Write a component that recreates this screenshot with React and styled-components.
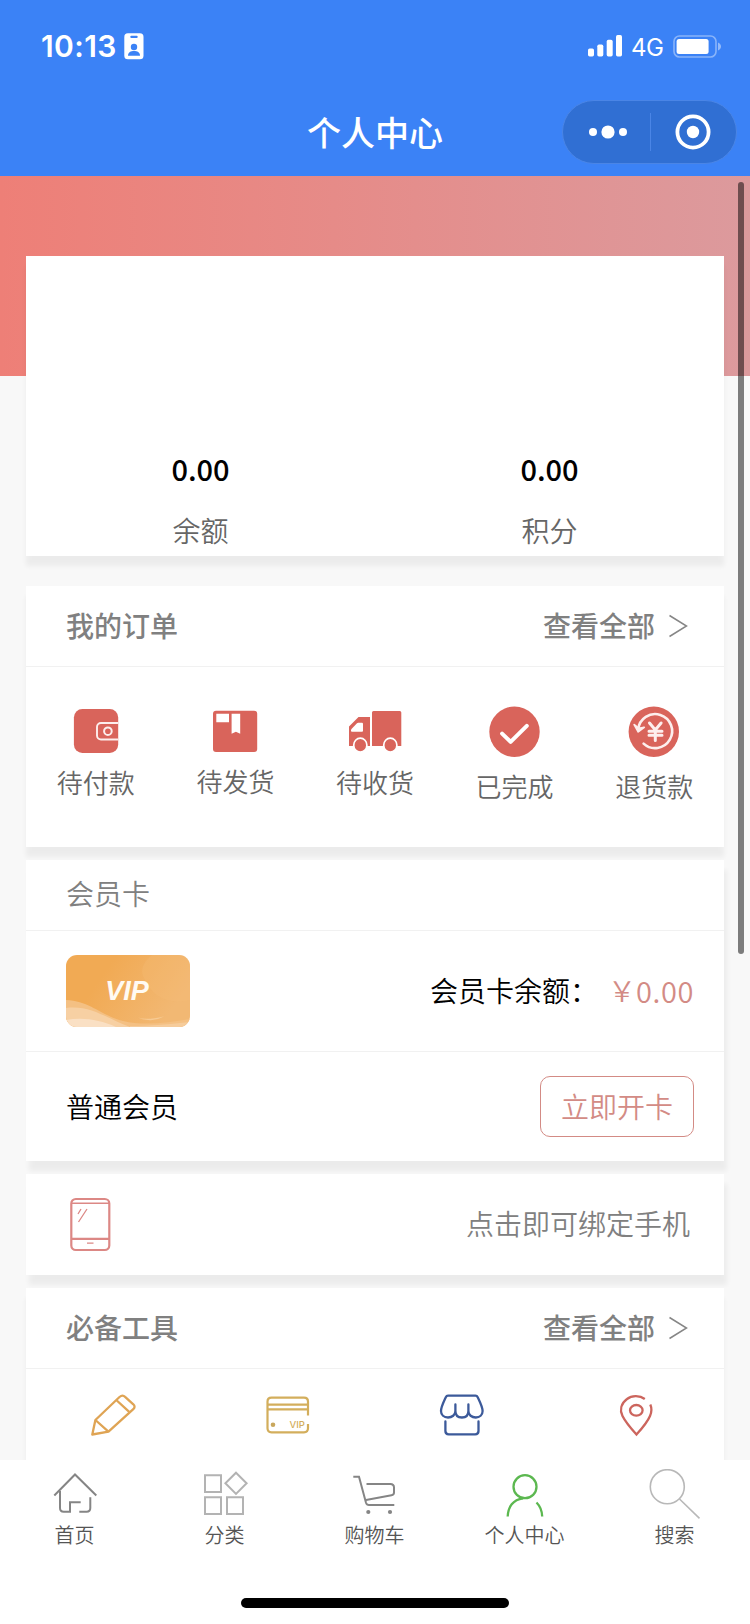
import styled, { createGlobalStyle } from 'styled-components';

const orders = [
  { name: '待付款', icon: WalletIcon },
  { name: '待发货', icon: BoxIcon },
  { name: '待收货', icon: TruckIcon },
  { name: '已完成', icon: DoneIcon },
  { name: '退货款', icon: RefundIcon },
];

const tools = [PencilIcon, VipCardIcon, ShopIcon, PinIcon];

const tabs = [
  { name: '首页', icon: HomeIcon },
  { name: '分类', icon: CategoryIcon },
  { name: '购物车', icon: CartIcon },
  { name: '个人中心', icon: UserIcon },
  { name: '搜索', icon: SearchIcon },
];

const App = () => {
  return (
    <Page>
      <GlobalStyle />
      <Header>
        <StatusBar>
          <Clock>
            10:13
            <BadgeIcon />
          </Clock>
          <Signals>
            <SignalIcon />
            <Network>4G</Network>
            <BatteryIcon />
          </Signals>
        </StatusBar>
        <NavBar>
          <h1>个人中心</h1>
          <Capsule>
            <CapsuleButton aria-label='更多' $width={87}>
              <MoreIcon />
            </CapsuleButton>
            <CapsuleButton aria-label='关闭' $width={87} $divided>
              <CloseIcon />
            </CapsuleButton>
          </Capsule>
        </NavBar>
      </Header>

      <Content>
        <Banner />
        <AccountCard>
          <Stat>
            <strong>0.00</strong>
            <span>余额</span>
          </Stat>
          <Stat>
            <strong>0.00</strong>
            <span>积分</span>
          </Stat>
        </AccountCard>

        <Card $top={30} $height={261}>
          <SectionHead title='我的订单' />
          <OrderList>
            {orders.map(({ name, icon: Icon }) => (
              <li key={name}>
                <Icon />
                <span>{name}</span>
              </li>
            ))}
          </OrderList>
        </Card>

        <Card $top={13} $height={301} $shadowX={3}>
          <Row $height={71} $line>
            <Muted>会员卡</Muted>
          </Row>
          <Row $height={121} $line>
            <MemberCard />
            <Balance>
              会员卡余额：<em>￥</em>
              <b>0.00</b>
            </Balance>
          </Row>
          <Row $height={109}>
            <Level>普通会员</Level>
            <OpenButton>立即开卡</OpenButton>
          </Row>
        </Card>

        <Card $top={13} $height={101} $shadowX={3}>
          <Row $height={101} $right={34}>
            <PhoneIcon />
            <Muted>点击即可绑定手机</Muted>
          </Row>
        </Card>

        <Card $top={13} $height={260}>
          <SectionHead title='必备工具' />
          <ToolList>
            {tools.map((Icon, i) => (
              <li key={i}>
                <Icon />
              </li>
            ))}
          </ToolList>
        </Card>
        <ScrollBar />
      </Content>

      <TabBar>
        <TabList>
          {tabs.map(({ name, icon: Icon }) => (
            <li key={name}>
              <Icon />
              <span>{name}</span>
            </li>
          ))}
        </TabList>
        <HomeIndicator />
      </TabBar>
    </Page>
  );
};

const SectionHead = ({ title }) => (
  <Row $height={81} $right={36} $line>
    <h2>{title}</h2>
    <More>
      <span>查看全部</span>
      <svg width='20' height='24' fill='none' stroke='#868686' strokeWidth='1.5'>
        <path d='M1.5 1.5 18.5 12 1.5 22.5' />
      </svg>
    </More>
  </Row>
);

/* 상태바, 네비게이션 아이콘 */
function BadgeIcon() {
  return (
    <svg width='20' height='27' viewBox='0 0 20 27'>
      <rect x='.3' y='.3' width='19.2' height='26' rx='3.6' fill='#fff' />
      <rect x='6.3' y='2.8' width='7.4' height='2.2' rx='1' fill='#3b82f6' />
      <circle cx='10' cy='14' r='3.2' fill='#3b82f6' />
      <path d='M4 22.8c0-3.6 2.8-4.8 6-4.8s6 1.2 6 4.8z' fill='#3b82f6' />
    </svg>
  );
}

function SignalIcon() {
  return (
    <svg width='35' height='22' fill='#fff'>
      <rect x='0' y='13.5' width='6' height='8' rx='1.7' />
      <rect x='9.3' y='9.5' width='6' height='12' rx='1.7' />
      <rect x='18.7' y='4.7' width='6' height='16.8' rx='1.7' />
      <rect x='28' y='0' width='6' height='21.5' rx='1.7' />
    </svg>
  );
}

function BatteryIcon() {
  return (
    <svg width='49' height='23' viewBox='0 0 49 23'>
      <rect x='1' y='1' width='42' height='21' rx='5.5' fill='none' stroke='#fff' strokeOpacity='.4' strokeWidth='1.6' />
      <rect x='3.6' y='4' width='32' height='15' rx='2.5' fill='#fff' />
      <path d='M45 7.5c4 1.5 4 6.5 0 8z' fill='#fff' fillOpacity='.45' />
    </svg>
  );
}

function MoreIcon() {
  return (
    <svg width='38' height='14' fill='#fff'>
      <circle cx='4' cy='7' r='4' />
      <circle cx='19' cy='7' r='6.6' />
      <circle cx='34' cy='7' r='4' />
    </svg>
  );
}

function CloseIcon() {
  return (
    <svg width='36' height='36'>
      <circle cx='18' cy='18' r='15.6' fill='none' stroke='#fff' strokeWidth='3.8' />
      <circle cx='18' cy='18' r='6.2' fill='#fff' />
    </svg>
  );
}

/* 주문 아이콘 */
function WalletIcon() {
  return (
    <svg width='56' height='47' fill='#d9645b'>
      <rect x='5.9' y='3' width='44.3' height='44' rx='8.5' />
      <path d='M50.2 17H33a4 4 0 0 0-4 4v8.5a4 4 0 0 0 4 4h17.2' fill='none' stroke='#fdeeed' strokeWidth='1.9' />
      <circle cx='39.9' cy='25.2' r='3.8' fill='none' stroke='#fdeeed' strokeWidth='2' />
    </svg>
  );
}

function BoxIcon() {
  return (
    <svg width='56' height='46' fill='#d9645b'>
      <rect x='6' y='4.8' width='44.2' height='41.2' rx='3' />
      <path d='M9.3 7.8H22v8.5H9.3zM24.6 7.8h8.6v20l-4.3-2-4.3 2z' fill='#fff' />
    </svg>
  );
}

function TruckIcon() {
  return (
    <svg width='56' height='46.5' fill='#d9645b'>
      <path d='M2 40V20.5L11.5 11H23v29zM25 6.5q0-1.5 1.5-1.5h26.3q1.5 0 1.5 1.5V40H25z' />
      <path d='M4 25v-1.5l6-6.2q.5-.5 1.2-.5H15q1 0 1 1v7q0 1-1 1H5q-1 0-1-.8z' fill='#fff' />
      <ellipse cx='13.3' cy='39.2' rx='6.6' ry='7' stroke='#fff' strokeWidth='1.7' />
      <ellipse cx='43.3' cy='39.2' rx='6.6' ry='7' stroke='#fff' strokeWidth='1.7' />
    </svg>
  );
}

function DoneIcon() {
  return (
    <svg width='56' height='51' fill='none'>
      <circle cx='27.5' cy='25.7' r='25.2' fill='#d9645b' />
      <path d='m15.1 27.6 8.5 8.2 16.2-16' stroke='#fff' strokeWidth='4' strokeLinecap='round' strokeLinejoin='round' />
    </svg>
  );
}

function RefundIcon() {
  return (
    <svg width='56' height='51' fill='none' stroke='#fdeeed' strokeWidth='2.6' strokeLinecap='round'>
      <circle cx='27.8' cy='25.7' r='25.2' fill='#d9645b' stroke='none' />
      <path d='M12.2 23.5A17 17 0 1 1 17.6 37.6' />
      <path d='m8.2 18.6 4 7.2 6-4.5-5.5 1z' fill='#fdeeed' strokeWidth='1.8' strokeLinejoin='round' />
      <path d='m23.5 17 5.8 7 5.8-7M29.3 24v10.500M23 25.3h13M23 29.3h13' strokeWidth='3' />
    </svg>
  );
}

/* 멤버십 */
function MemberCard() {
  return (
    <svg width='124' height='72' viewBox='0 0 124 72'>
      <defs>
        <linearGradient id='vip' x1='0' y1='0' x2='1' y2='.4'>
          <stop offset='.35' stopColor='#f1aa54' />
          <stop offset='1' stopColor='#f2b873' />
        </linearGradient>
        <clipPath id='vip-clip'>
          <rect width='124' height='72' rx='11' />
        </clipPath>
      </defs>
      <g clipPath='url(#vip-clip)'>
        <rect width='124' height='72' fill='url(#vip)' />
        <path d='M86 0c-11 9-12 17-7 25 6 12 18 26 45 20V0z' fill='#f4bd77' fillOpacity='.3' />
        <path d='M0 45c24 1 34 15 57 21 20 5 44 2 67-2v8H0z' fill='#f4c083' />
        <path d='M0 53c24-3 38 9 64 19H0z' fill='#f7d0a3' />
        <path d='M0 65c18-3 34 0 50 7H0z' fill='#fae0c4' />
        <path d='M64 71c22 0 40-2 60-4v5H64z' fill='#f6cc9b' />
        <path d='M72 62.5q8 3 26-1-8 4.5-16 3.500-6-.5-10-2.500z' fill='#f7ca92' />
      </g>
      <VipText x='61' y='44.5' textAnchor='middle'>
        VIP
      </VipText>
    </svg>
  );
}

function PhoneIcon() {
  return (
    <svg width='48' height='56' fill='none' stroke='#dc8885' strokeWidth='2.2'>
      <rect x='5.3' y='2' width='38' height='51' rx='4.5' />
      <path d='M6 6.3h37' strokeWidth='1.4' />
      <path d='M6 41.8h37' />
      <path d='m15 12-3 5M21 12l-8.5 13M21 46.1h6.5' strokeWidth='1.3' />
    </svg>
  );
}

/* 도구 아이콘 */
function PencilIcon() {
  return (
    <svg width='48' height='48' fill='none' stroke='#dfa454' strokeWidth='2.3' strokeLinejoin='round'>
      <path d='M3.3 43.5 6.4 29 30.5 6q3-2.7 5.6-.2l8.2 7.5q2.5 2.5 0 4.8L19.5 40.7z' />
      <path d='m6.4 29 13 11.7M27.8 9.5l12.4 11.4' />
    </svg>
  );
}

function VipCardIcon() {
  return (
    <svg width='48' height='48' fill='none' stroke='#d3ae5c' strokeWidth='2.2'>
      <path d='M44 24.5V10.7q0-4-4-4H7.5q-4 0-4 4v26.600q0 4 4 4H40q4 0 4-4V33M3.5 13.7H44M3.5 18.3H44' />
      <circle cx='9' cy='33.7' r='2.3' fill='#c9a75c' stroke='none' />
      <CardText x='25.5' y='37.3'>
        VIP
      </CardText>
    </svg>
  );
}

function ShopIcon() {
  return (
    <svg width='48' height='48' fill='none' stroke='#3c5a9a' strokeWidth='2.3' strokeLinecap='round'>
      <path d='M10 4.7h27.5q1.5 0 2.2 1.5C42 11 44.6 16 44.6 20c0 4-3 6.5-6.8 6.5-4 0-7.4-2.5-7.4-6.5 0 4-2.5 6.5-6.5 6.5S17.4 24 17.4 20c0 4-3.4 6.5-7.4 6.5-4 0-7-2.5-7-6.5 0-4 2.6-9 4.8-13.8q.7-1.5 2.2-1.5zM17.4 20v-6.5M30.4 20v-6.5' />
      <path d='M7.4 30.5V40q0 3.3 3.3 3.3h26.5q3.3 0 3.3-3.3v-9.5' />
    </svg>
  );
}

function PinIcon() {
  return (
    <svg width='48' height='48' fill='none' stroke='#cc655d' strokeWidth='2.3'>
      <path d='M31.8 8C27 4.5 19 4 14 8c-6 4.5-7.5 11-4.5 17C13 32 18.5 38 23.5 43.5 28.5 38 34 32 37 25c1.8-4 2-7.5.3-11.5' />
      <ellipse cx='23.3' cy='19.3' rx='6.3' ry='5.3' />
    </svg>
  );
}

/* 탭바 아이콘 */
function HomeIcon() {
  return (
    <svg width='56' height='50' fill='none' stroke='#858585' strokeWidth='2'>
      <path d='m7.3 26.5 20.7-21 21.3 21M13 22v17q0 3.7 3.7 3.7H23v-9.5h10.7M32.3 42.7h7.3q3.7 0 3.7-3.7V28.3' />
    </svg>
  );
}

function CategoryIcon() {
  return (
    <svg width='56' height='50' fill='none' stroke='#b3b3b3' strokeWidth='2'>
      <path d='M8 6.3h16V23H8zM8 28.3h16V45H8zM30 28.3h16V45H30zM39 3.7l10.6 10.6L39 24.9 28.4 14.3z' />
    </svg>
  );
}

function CartIcon() {
  return (
    <svg width='56' height='50' fill='none' stroke='#858585' strokeWidth='2'>
      <path d='M6.3 7.7H12l7 26q.7 2.3 3 2.3h25.3M19.5 15h23.8q3.7 0 3.7 3.5v5q0 2.3-2.5 2.7L19 31' />
      <circle cx='21.3' cy='43' r='2.1' fill='#858585' stroke='none' />
      <circle cx='43' cy='43' r='2.1' fill='#858585' stroke='none' />
    </svg>
  );
}

function UserIcon() {
  return (
    <svg width='56' height='50' fill='none' stroke='#5cb850' strokeWidth='2.3'>
      <circle cx='28' cy='17.7' r='11.5' />
      <path d='M10.7 47.5C11 38 16 30.5 26 29.3M39.5 33.5c3.5 3.5 5.5 8 5.7 14' />
    </svg>
  );
}

function SearchIcon() {
  return (
    <svg width='56' height='50' fill='none' stroke='#b8b8b8' strokeWidth='1.6'>
      <circle cx='20.3' cy='17.7' r='17' />
      <path d='m32.5 30 20 19.3' />
    </svg>
  );
}

const GlobalStyle = createGlobalStyle`
  * {
    box-sizing: border-box;
    margin: 0;
    padding: 0;
  }
  body {
    background: #fff;
    font-family: 'Noto Sans CJK SC', sans-serif;
    font-size: 28px;
    color: #000;
  }
  ul {
    list-style: none;
  }
  svg {
    display: block;
    flex-shrink: 0;
  }
  button {
    background: none;
    border: none;
    font: inherit;
  }
`;

const Page = styled.div`
  width: 750px;
  height: 1624px;
  overflow: hidden;
  display: flex;
  flex-direction: column;
`;

const Header = styled.header`
  height: 176px;
  flex-shrink: 0;
  background: #3b82f6;
  color: #fff;
`;

const StatusBar = styled.div`
  display: flex;
  justify-content: space-between;
  align-items: center;
  height: 92px;
  padding: 0 28px 0 41px;
  font-family: Inter, sans-serif;
`;

const Clock = styled.div`
  display: flex;
  align-items: center;
  gap: 7px;
  font-size: 30px;
  font-weight: 600;
  letter-spacing: 0.4px;
`;

const Signals = styled.div`
  display: flex;
  align-items: center;
`;

const Network = styled.span`
  width: 32px;
  margin: 2px 10px 0 8px;
  font-size: 24px;
  letter-spacing: -0.5px;
`;

const NavBar = styled.div`
  display: grid;
  grid-template-columns: 1fr auto 1fr;
  align-items: center;
  height: 80px;
  padding: 0 13px;

  h1 {
    grid-column: 2;
    padding-bottom: 2px;
    font-size: 34px;
    font-weight: 500;
  }
`;

const Capsule = styled.div`
  justify-self: end;
  display: flex;
  align-items: center;
  width: 175px;
  height: 64px;
  border: 1px solid #4a85e6;
  border-radius: 32px;
  background: #306fd3;
`;

const CapsuleButton = styled.button`
  display: flex;
  justify-content: center;
  align-items: center;
  width: ${({ $width }) => $width}px;
  height: 38px;
  padding-left: ${({ $divided }) => ($divided ? 0 : 3)}px;
  border-left: ${({ $divided }) => ($divided ? '1px solid #4a85e6' : 'none')};
`;

const Content = styled.main`
  position: relative;
  flex: 1;
  min-height: 0;
  overflow: hidden;
  padding: 0 26px;
  background: #f8f8f8;
`;

const Banner = styled.div`
  height: 200px;
  margin: 0 -26px;
  background: linear-gradient(to right, #ee7f77, #dc9a9d);
`;

const Card = styled.section`
  height: ${({ $height }) => $height}px;
  margin-top: ${({ $top }) => $top}px;
  background: #fff;
  box-shadow: ${({ $shadowX = 0 }) => $shadowX}px 10px 5px rgba(0, 0, 0, 0.05);
`;

const AccountCard = styled(Card).attrs({ $height: 300, $top: -120 })`
  position: relative;
  display: flex;
  align-items: flex-end;
`;

const Stat = styled.div`
  flex: 1;
  display: flex;
  flex-direction: column;
  align-items: center;
  line-height: 40px;
  padding-bottom: 6px;

  strong {
    font-weight: 500;
    font-size: 29px;
    margin-bottom: 22px;
  }
  span {
    color: #666;
    font-weight: 350;
  }
`;

const Row = styled.div`
  display: flex;
  justify-content: space-between;
  align-items: center;
  height: ${({ $height }) => $height}px;
  padding: 0 ${({ $right = 30 }) => $right}px 0 40px;
  border-bottom: ${({ $line }) => ($line ? '1px solid #f1f1f1' : 'none')};

  h2 {
    padding-bottom: 2px;
    color: #808080;
    font-size: 28px;
    font-weight: 500;
  }
`;

const More = styled.div`
  display: flex;
  align-items: center;
  gap: 13px;
  color: #808080;
  font-weight: 500;

  span {
    padding-bottom: 2px;
  }
`;

const Muted = styled.span`
  padding-bottom: 4px;
  color: #808080;
  font-weight: 350;
`;

const Level = styled.span`
  padding-bottom: 2px;
  font-weight: 350;
`;

const OrderList = styled.ul`
  display: flex;
  padding-top: 39px;

  li {
    flex: 1;
    display: flex;
    flex-direction: column;
    align-items: center;
  }
  span {
    margin-top: 11px;
    color: #666;
    font-size: 26px;
    font-weight: 350;
    line-height: 36px;
  }
`;

const Balance = styled.div`
  display: flex;
  align-items: center;
  padding-bottom: 3px;
  font-weight: 350;

  em,
  b {
    color: #d38b85;
    font-style: normal;
    font-weight: 350;
  }
  em {
    margin: 0 0 0 10px;
  }
  b {
    font-size: 29px;
    letter-spacing: 0.6px;
  }
`;

const OpenButton = styled.button`
  width: 154px;
  height: 61px;
  padding-bottom: 2px;
  border: 1px solid #d38b85;
  border-radius: 10px;
  color: #d38b85;
  font-weight: 350;
`;

const VipText = styled.text`
  fill: #fffaf2;
  font: italic 700 27px 'Liberation Sans', sans-serif;
`;

const CardText = styled.text`
  fill: #d3ae5c;
  stroke: none;
  font: 500 9.5px Inter, sans-serif;
`;

const ToolList = styled.ul`
  display: grid;
  grid-template-columns: repeat(4, 1fr);
  justify-items: center;
  padding-top: 22px;
`;

// 스크롤 위치 표시, 카드 위에 겹침
const ScrollBar = styled.div`
  position: absolute;
  top: 6px;
  right: 6px;
  width: 6px;
  height: 772px;
  border-radius: 3px;
  background: rgba(0, 0, 0, 0.5);
`;

const TabBar = styled.nav`
  display: flex;
  flex-direction: column;
  align-items: center;
  justify-content: space-between;
  height: 164px;
  flex-shrink: 0;
  padding: 9px 0 16px;
  background: #fff;
`;

const TabList = styled.ul`
  display: flex;
  width: 100%;

  li {
    flex: 1;
    display: flex;
    flex-direction: column;
    align-items: center;
  }
  span {
    margin-top: 1px;
    padding-right: 1px;
    color: #555;
    font-size: 20px;
    font-weight: 350;
    line-height: 30px;
  }
`;

const HomeIndicator = styled.div`
  width: 268px;
  height: 10px;
  border-radius: 5px;
  background: #000;
`;

export default App;
